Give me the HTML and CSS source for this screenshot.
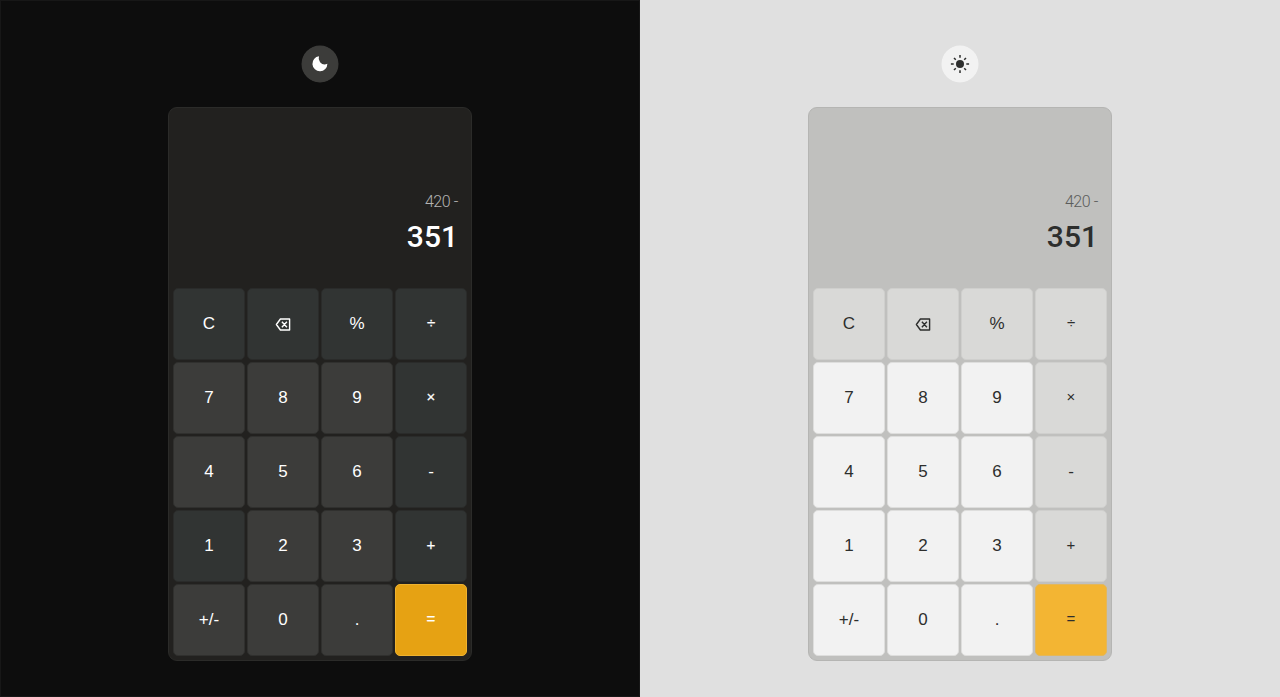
FILE: index.html
```html
<!DOCTYPE html>
<html lang="en">
<head>
<meta charset="utf-8">
<title>Calculator</title>
<link rel="stylesheet" href="styles.css">
</head>
<body>
<main class="themes">
  <section class="theme dark">
    <button class="toggle" aria-label="Theme"><svg width="18" height="18" viewBox="0 0 18 18"><path fill="currentColor" d="M8 1.3A6 6 0 0 0 9.1 7.2a6 6 0 0 0 7.3 1.6A7.5 7.5 0 1 1 8 1.3Z"/></svg></button>
    <div class="calc">
      <div class="display"><div class="previous">420 -</div><div class="current">351</div></div>
      <div class="keys">
        <button class="key op">C</button><button class="key op" aria-label="Delete"><svg class="del" width="16" height="13" viewBox="0 0 16 13"><path d="M5.4 1H14.6V12H5.4L1.4 6.5ZM6.9 3.8l5 5.4M11.9 3.8L6.9 9.2"/></svg></button><button class="key op">%</button><button class="key op sign">÷</button>
        <button class="key">7</button><button class="key">8</button><button class="key">9</button><button class="key op sign">×</button>
        <button class="key">4</button><button class="key">5</button><button class="key">6</button><button class="key op">-</button>
        <button class="key op">1</button><button class="key">2</button><button class="key">3</button><button class="key op sign">+</button>
        <button class="key">+/-</button><button class="key">0</button><button class="key">.</button><button class="key equals sign">=</button>
      </div>
    </div>
  </section>
  <section class="theme light">
    <button class="toggle" aria-label="Theme"><svg width="20" height="20" viewBox="0 0 20 20"><circle cx="10" cy="10" r="4" fill="currentColor"/><path class="rays" d="M10 .9v2.8M10 16.3v2.8M.9 10h2.8M16.3 10h2.8M4 4l1.8 1.8M14.2 14.2L16 16M4 16l1.8-1.8M14.2 5.8L16 4"/></svg></button>
    <div class="calc">
      <div class="display"><div class="previous">420 -</div><div class="current">351</div></div>
      <div class="keys">
        <button class="key op">C</button><button class="key op" aria-label="Delete"><svg class="del" width="16" height="13" viewBox="0 0 16 13"><path d="M5.4 1H14.6V12H5.4L1.4 6.5ZM6.9 3.8l5 5.4M11.9 3.8L6.9 9.2"/></svg></button><button class="key op">%</button><button class="key op sign">÷</button>
        <button class="key">7</button><button class="key">8</button><button class="key">9</button><button class="key op sign">×</button>
        <button class="key">4</button><button class="key">5</button><button class="key">6</button><button class="key op">-</button>
        <button class="key">1</button><button class="key">2</button><button class="key">3</button><button class="key op sign">+</button>
        <button class="key">+/-</button><button class="key">0</button><button class="key">.</button><button class="key equals sign">=</button>
      </div>
    </div>
  </section>
</main>
</body>
</html>
```

FILE: styles.css
```css
* { box-sizing: border-box; }
body { margin: 0; }
.themes { display: grid; grid-template-columns: 1fr 1fr; height: 697px; overflow: hidden; }
.theme {
  display: flex;
  flex-direction: column;
  align-items: center;
  padding-top: 46px;
  background: var(--page);
  color: var(--text);
}
.dark {
  --page: #0d0d0d; --panel: #22211f; --edge: #2b2b29; --key: #3c3c3a; --key-edge: #30302e;
  --op: #313433; --op-edge: #2a2b2a; --equals: #e6a213; --equals-edge: #efb22f;
  --text: #fff; --muted: #b4b4b3; --round: #3c3c3a;
  border: 1px solid #171717;
  padding-top: 45px;
}
.light {
  --page: #e0e0e0; --panel: #c0c0be; --edge: #b5b5b3; --key: #f2f2f2; --key-edge: #dededd;
  --op: #d9d9d7; --op-edge: #cfcfcd; --equals: #f3b533; --equals-edge: #e3b75b;
  --text: #2d2e2d; --muted: #5b5c5b; --round: #f2f2f2;
}
button { padding: 0; border: 0; color: inherit; }
.toggle {
  display: grid;
  place-items: center;
  flex: none;
  width: 36px;
  height: 36px;
  border-radius: 50%;
  background: var(--round);
  box-shadow: 0 0 0 .5px var(--round);
}
.rays { fill: none; stroke: currentColor; stroke-width: 1.5; }
.calc {
  flex: none;
  width: 304px;
  height: 554px;
  margin-top: 25px;
  padding: 4px;
  border: 1px solid var(--edge);
  border-radius: 9px;
  background: var(--panel);
}
.display {
  height: 176px;
  padding: 79px 8px 0 0;
  text-align: right;
  font-family: Roboto, sans-serif;
}
.previous { padding-right: 1px; color: var(--muted); font-size: 16px; font-weight: 300; line-height: 21px; letter-spacing: -.4px; }
.current { padding-right: 1px; margin-top: 5px; font-size: 30px; font-weight: 500; line-height: 40px; }
.keys { display: grid; grid-template-columns: repeat(4, 72px); grid-auto-rows: 72px; gap: 2px; }
.key {
  display: flex;
  align-items: center;
  justify-content: center;
  border: 1px solid var(--key-edge);
  border-radius: 5px;
  background: var(--key);
  font: 17px "Liberation Sans", Arial, sans-serif;
}
.sign { padding-bottom: 3px; font-size: 15px; }
.dark .sign { -webkit-text-stroke: .25px currentColor; }
.op { border-color: var(--op-edge); background: var(--op); }
.equals { border-color: var(--equals-edge); background: var(--equals); }
.del path { fill: none; stroke: currentColor; stroke-width: 1.4; stroke-linejoin: round; }
```
